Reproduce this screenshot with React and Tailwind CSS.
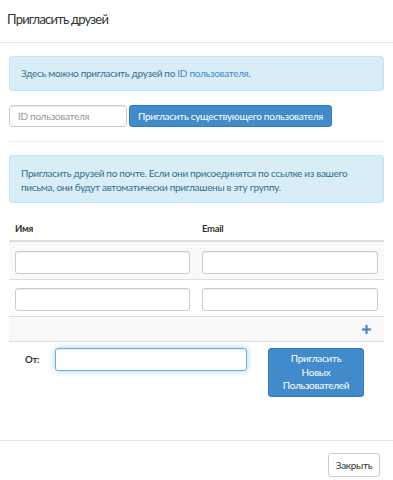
import React from 'react';

function TextInput({ placeholder, className = '' }) {
  return (
    <input
      type="text"
      placeholder={placeholder}
      className={`h-[23px] rounded-[3px] border border-[#ccc] bg-white px-[8px] text-[10px] tracking-[-0.3px] text-[#555] shadow-[inset_0_1px_1px_rgba(0,0,0,0.075)] outline-none placeholder:text-[#999] ${className}`}
    />
  );
}

function InviteRow({ striped, first }) {
  return (
    <div className={`flex ${first ? '' : 'border-t border-[#ddd]'} ${striped ? 'bg-[#f9f9f9]' : 'bg-white'}`}>
      <div className="w-[187px] px-[6px] pt-[6px] pb-[5px]">
        <TextInput className="w-[175px]" />
      </div>
      <div className="flex-1 px-[6px] pt-[6px] pb-[5px]">
        <TextInput className="w-[176px]" />
      </div>
    </div>
  );
}

export default function App() {
  return (
    <div className="h-[480px] w-[393px] overflow-hidden bg-white font-['Lato','Liberation_Sans',sans-serif] tracking-[-0.3px] text-[#333]">
      {/* header */}
      <div className="flex h-[43px] items-center border-b border-[#e5e5e5] px-[7px] pb-[4px]">
        <h4 className="text-[13px] leading-none tracking-[-0.8px]">Пригласить друзей</h4>
      </div>

      <div className="px-[9px] pt-[13px]">
        <div className="flex h-[35px] items-center rounded-[3px] border border-[#bce8f1] bg-[#d9edf7] px-[11px] text-[10px] text-[#31708f]">
          <span>
            Здесь можно пригласить друзей по <span className="text-[#428bca]">ID пользователя</span>.
          </span>
        </div>

        <div className="mt-[14px] flex gap-[2px]">
          <TextInput placeholder="ID пользователя" className="!h-[22px] w-[118px]" />
          <button className="h-[22px] w-[203px] whitespace-nowrap rounded-[3px] border border-[#357ebd] bg-[#428bca] text-[10px] text-white">
            Пригласить существующего пользователя
          </button>
        </div>

        <div className="mt-[14px] border-t border-[#eee]" />

        <div className="mt-[13px] h-[48px] rounded-[3px] border border-[#bce8f1] bg-[#d9edf7] px-[11px] pt-[11px] text-[10px] leading-[13.5px] text-[#31708f]">
          Пригласить друзей по почте. Если они присоединятся по ссылке из вашего письма, они будут автоматически приглашены в эту группу.
        </div>

        {/* table */}
        <div className="mt-[14px]">
          <div className="flex h-[25px] items-center border-b-2 border-[#ddd] pt-[1px] text-[9.5px] font-bold">
            <div className="w-[187px] px-[6px]">Имя</div>
            <div className="flex-1 px-[6px]">Email</div>
          </div>
          <InviteRow striped first />
          <InviteRow />
          <div className="flex h-[26px] items-center justify-end border-y border-[#ddd] bg-[#f9f9f9] pr-[13px]">
            <svg width="9" height="9" viewBox="0 0 9 9">
              <rect x="3.4" y="0" width="2.2" height="9" fill="#428bca" />
              <rect x="0" y="3.4" width="9" height="2.2" fill="#428bca" />
            </svg>
          </div>
        </div>

        {/* from row */}
        <div className="mt-[6px] flex items-start">
          <label className="mt-[5px] ml-[16px] w-[30px] text-[9.5px] font-bold">От:</label>
          <input
            type="text"
            className="h-[23px] w-[192px] rounded-[3px] border border-[#66afe9] bg-white px-[8px] text-[10px] shadow-[inset_0_1px_1px_rgba(0,0,0,0.075),0_0_6px_rgba(102,175,233,0.6)] outline-none"
          />
          <button className="ml-[21px] h-[49px] w-[96px] rounded-[3px] border border-[#357ebd] bg-[#428bca] px-[12px] text-[10px] leading-[13.5px] text-white">
            Пригласить Новых Пользователей
          </button>
        </div>
      </div>

      {/* footer */}
      <div className="mt-[43px] flex justify-end border-t border-[#e5e5e5] pt-[12px] pr-[13px]">
        <button className="h-[24px] w-[52px] rounded-[3px] border border-[#ccc] bg-white text-[10px] text-[#333]">
          Закрыть
        </button>
      </div>
    </div>
  );
}
